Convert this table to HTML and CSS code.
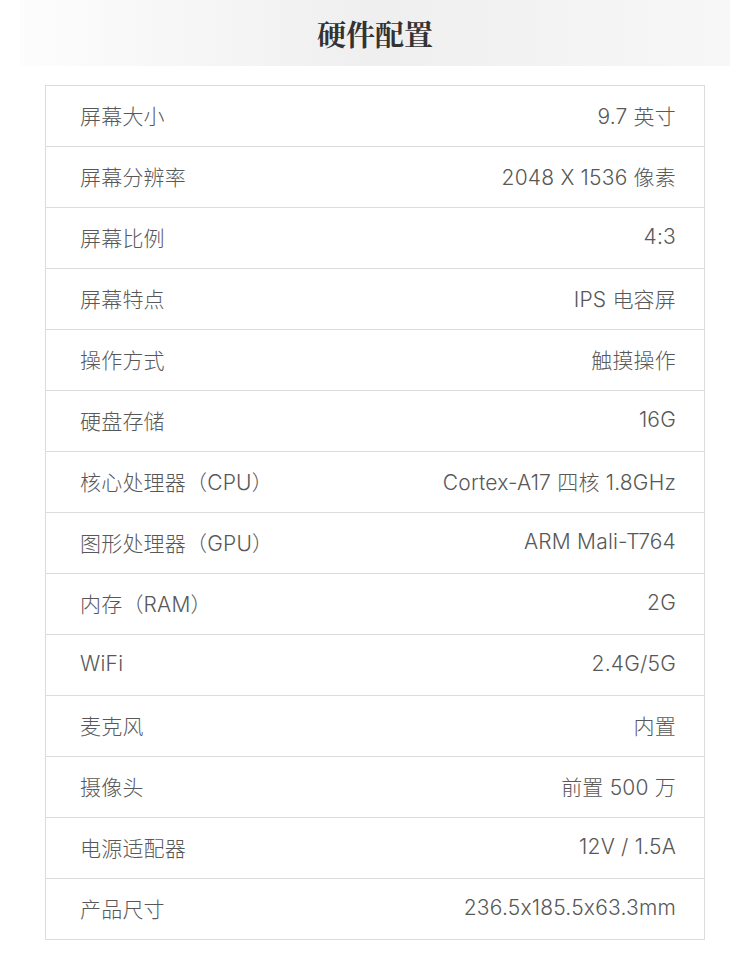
FILE: index.html
```html
<!DOCTYPE html>
<html lang="zh-CN">
<head>
    <meta charset="UTF-8">
    <meta name="viewport" content="width=device-width, initial-scale=1.0">
    <title>硬件配置</title>
    <link rel="stylesheet" href="styles.css">
</head>
<body>
    <header class="title-bar">
        <h1>硬件配置</h1>
    </header>
    <main>
        <table class="spec-table">
            <tr><td>屏幕大小</td><td>9.7 英寸</td></tr>
            <tr><td>屏幕分辨率</td><td>2048 X 1536 像素</td></tr>
            <tr><td>屏幕比例</td><td>4:3</td></tr>
            <tr><td>屏幕特点</td><td>IPS 电容屏</td></tr>
            <tr><td>操作方式</td><td>触摸操作</td></tr>
            <tr><td>硬盘存储</td><td>16G</td></tr>
            <tr><td>核心处理器（CPU）</td><td>Cortex-A17 四核 1.8GHz</td></tr>
            <tr><td>图形处理器（GPU）</td><td>ARM Mali-T764</td></tr>
            <tr><td>内存（RAM）</td><td>2G</td></tr>
            <tr><td>WiFi</td><td>2.4G/5G</td></tr>
            <tr><td>麦克风</td><td>内置</td></tr>
            <tr><td>摄像头</td><td>前置 500 万</td></tr>
            <tr><td>电源适配器</td><td>12V / 1.5A</td></tr>
            <tr><td>产品尺寸</td><td>236.5x185.5x63.3mm</td></tr>
        </table>
    </main>
</body>
</html>
```

FILE: styles.css
```css
body {
    margin: 0;
    padding: 0;
    background-color: #fff;
    font-family: Inter, "Noto Sans CJK SC", sans-serif;
    font-weight: 300;
    font-feature-settings: "calt" 0;
    color: #585858;
}
.title-bar {
    margin: 0 20px;
    height: 66px;
    display: flex;
    align-items: center;
    justify-content: center;
    background: linear-gradient(to right, #fdfdfd, #efefef 50%, #f7f7f7);
}
.title-bar h1 {
    margin: 0;
    font-family: "Noto Serif CJK SC", "Noto Sans CJK SC", serif;
    font-size: 29px;
    font-weight: bold;
    color: #333;
}
main {
    padding: 19px 45px 20px;
}
.spec-table {
    width: 100%;
    border-collapse: collapse;
    border: 1px solid #dcdcdc;
}
.spec-table td {
    height: 57px;
    padding: 0 0 3px;
    font-size: 21px;
    letter-spacing: 0.2px;
    border-bottom: 1px solid #dcdcdc;
    vertical-align: middle;
}
.spec-table td:first-child {
    padding-left: 34px;
    text-align: left;
}
.spec-table td:last-child {
    padding-right: 28px;
    text-align: right;
}
```
